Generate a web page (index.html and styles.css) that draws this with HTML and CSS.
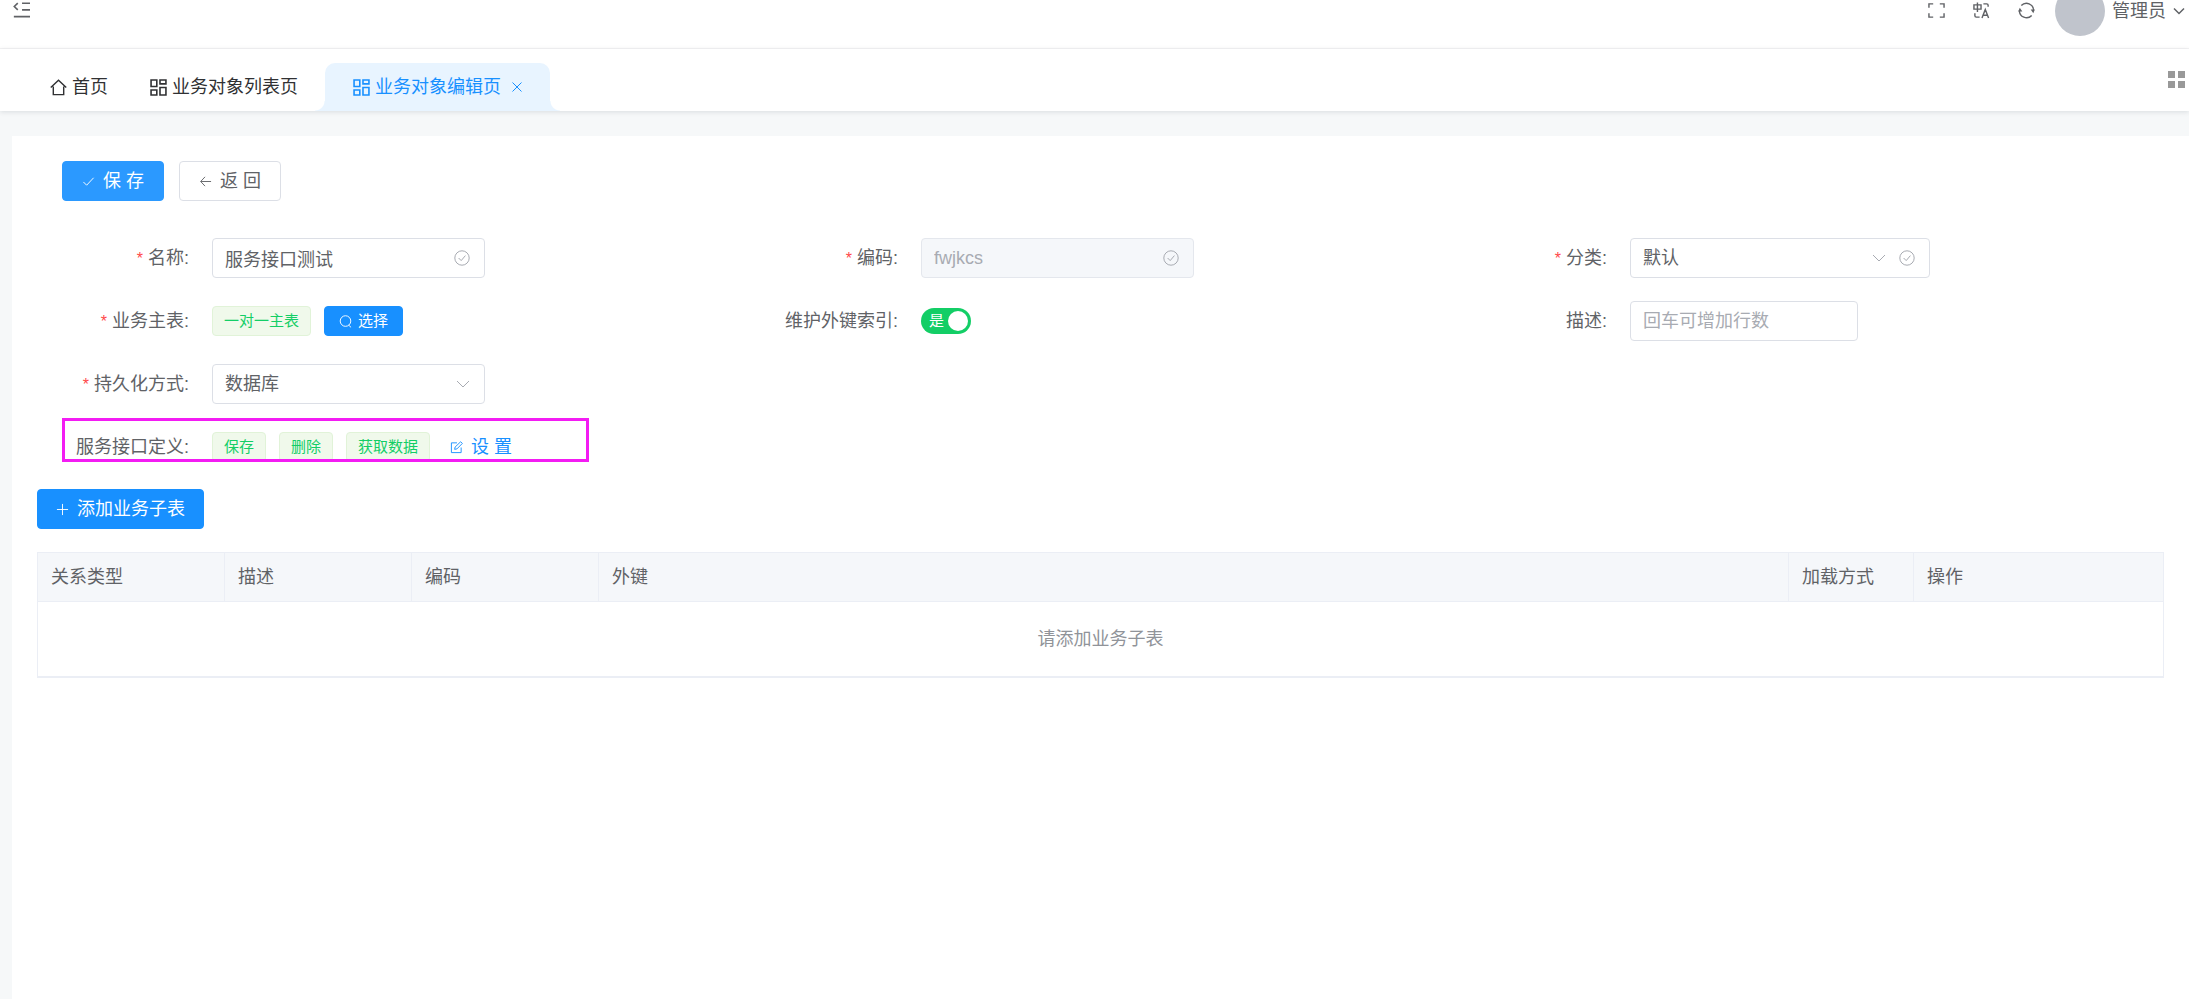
FILE: index.html
```html
<!DOCTYPE html>
<html lang="zh-CN">
<head>
<meta charset="utf-8">
<title>业务对象编辑页</title>
<link rel="stylesheet" href="styles.css">
</head>
<body>
<svg class="sprite" aria-hidden="true">
  <symbol id="i-grid" viewBox="0 0 16 16"><path d="M1 1h5.4v6H1zM9.4 1H15v3.6H9.4zM1 10.4h5.4V15H1zM9.4 8H15v7H9.4z"/></symbol>
  <symbol id="i-okc" viewBox="0 0 16 16"><circle cx="8" cy="8" r="7.2"/><path d="M4.6 8l2.6 2.6 4.2-5"/></symbol>
  <symbol id="i-down" viewBox="0 0 14 14"><path d="M1 4l6 6 6-6"/></symbol>
</svg>

<header class="header">
  <button class="icon-btn" aria-label="收起菜单"><svg class="ico" viewBox="0 0 16 16"><path d="M4.5 1L1.2 4.2l3.300 3.200M8.500 1.200H16M8.500 7.400H16M.8 13.800H16"/></svg></button>
  <div class="tools">
    <button class="icon-btn" aria-label="全屏"><svg class="ico" viewBox="0 0 18 16"><path d="M1 5V1h4.500M12.500 1H17v4M17 11v4h-4.500M5.500 15H1v-4"/></svg></button>
    <button class="icon-btn" aria-label="语言"><svg class="ico" viewBox="0 0 18 18"><path d="M1 3h7.500v4.500H1zM4.700 .5v10M11 2h3.500q1.500 0 1.500 1.500V5M2 12v2.500Q2 16 3.500 16H7M9.500 17l3.500-9 3.500 9M10.600 14h4.800"/></svg></button>
    <button class="icon-btn" aria-label="刷新"><svg class="ico" viewBox="0 0 18 18"><path d="M3.500 3.800A7.500 7.500 0 0 1 16.500 9M14.500 14.200A7.500 7.500 0 0 1 1.500 9"/><path class="solid" d="M13.400 8h4.400l-1.600 3.800zM.2 10h4.400L1.900 6.200z"/></svg></button>
    <span class="avatar"></span>
    <button class="user">管理员<svg class="caret" viewBox="0 0 14 14"><path d="M2 4.500l5 5 5-5"/></svg></button>
  </div>
</header>

<nav class="tabs">
  <a class="tab" href="#"><svg class="ico" viewBox="0 0 18 18"><path d="M3.500 8v8.500h11V8M.8 9L9 1.200 17.200 9"/></svg>首页</a>
  <a class="tab" href="#"><svg class="ico"><use href="#i-grid"/></svg>业务对象列表页</a>
  <a class="tab active" href="#"><svg class="ico"><use href="#i-grid"/></svg>业务对象编辑页<svg class="close" viewBox="0 0 10 10"><path d="M.5.5l9 9M9.500.5l-9 9"/></svg></a>
  <button class="apps" aria-label="更多"><i></i><i></i><i></i><i></i></button>
</nav>

<main class="card">
  <div class="actions">
    <button class="btn primary light"><svg class="bi" viewBox="0 0 14 14"><path d="M1.500 7.500L5 11l7.500-8"/></svg>保 存</button>
    <button class="btn"><svg class="bi" viewBox="0 0 14 14"><path d="M13 7H2M6.500 2L1.800 7l4.700 5"/></svg>返 回</button>
  </div>

  <form class="form">
    <div class="item"><label class="req" for="name">名称:</label>
      <span class="field"><input id="name" type="text" value="服务接口测试"><span class="suffix"><svg><use href="#i-okc"/></svg></span></span></div>
    <div class="item"><label class="req" for="code">编码:</label>
      <span class="field"><input id="code" type="text" value="fwjkcs" disabled><span class="suffix"><svg><use href="#i-okc"/></svg></span></span></div>
    <div class="item"><label class="req" for="type">分类:</label>
      <span class="field wide"><select id="type"><option>默认</option></select><span class="suffix"><svg class="arrow"><use href="#i-down"/></svg><svg><use href="#i-okc"/></svg></span></span></div>

    <div class="item"><label class="req" for="pick">业务主表:</label>
      <span class="tag">一对一主表</span><button class="btn primary small" id="pick" type="button"><svg class="bi" viewBox="0 0 14 14"><circle cx="7" cy="6.500" r="5.700"/><path d="M10.500 11l2.500 2.300"/></svg>选择</button></div>
    <div class="item"><label for="fk">维护外键索引:</label>
      <span class="switch"><input id="fk" type="checkbox" role="switch" checked><span class="on">是</span></span></div>
    <div class="item"><label for="desc">描述:</label>
      <textarea id="desc" rows="1" placeholder="回车可增加行数"></textarea></div>

    <div class="item"><label class="req" for="store">持久化方式:</label>
      <span class="field"><select id="store"><option>数据库</option></select><span class="suffix"><svg class="arrow"><use href="#i-down"/></svg></span></span></div>

    <div class="item first marked"><label for="set">服务接口定义:</label>
      <span class="tag">保存</span><span class="tag">删除</span><span class="tag">获取数据</span>
      <button class="link" id="set" type="button"><svg class="bi" viewBox="0 0 14 14"><path d="M7.500 2H1.500v10.500H12V7M5 9l.5-2.500L11.500.8l1.800 1.800L7.500 8.500z"/></svg>设 置</button></div>
  </form>

  <button class="btn primary add"><svg class="bi" viewBox="0 0 14 14"><path d="M7 1v12M1 7h12"/></svg>添加业务子表</button>

  <table class="grid">
    <colgroup><col class="c-m"><col class="c-m"><col class="c-m"><col><col class="c-s"><col class="c-l"></colgroup>
    <thead><tr><th>关系类型</th><th>描述</th><th>编码</th><th>外键</th><th>加载方式</th><th>操作</th></tr></thead>
    <tbody><tr><td colspan="6">请添加业务子表</td></tr></tbody>
  </table>
</main>
</body>
</html>
```
FILE: styles.css
```css
*, *::before, *::after { box-sizing: border-box; }
html, body { height: 100%; }
body {
  margin: 0;
  display: flex;
  flex-direction: column;
  overflow: hidden;
  background: #f6f8f9;
  color: #606266;
  font: 400 18px/24px "Liberation Sans", "Noto Sans CJK SC", sans-serif;
}
button, input, select, textarea { font: inherit; color: inherit; margin: 0; }
button { background: none; border: 0; padding: 0; cursor: pointer; }
svg { fill: none; stroke: currentColor; }
.sprite { position: absolute; width: 0; height: 0; }
.solid { fill: currentColor; stroke: none; }

/* The bar is partly scrolled out above the window */
.header {
  flex: none;
  display: flex;
  align-items: center;
  justify-content: space-between;
  height: 76px;
  margin-top: -27px;
  padding: 0 3px 0 13px;
  background: #fff;
  border-bottom: 1px solid #f4f4f5;
}
.icon-btn { display: flex; }
.ico { width: 17px; height: 17px; stroke-width: 1.5; }
.tools { display: flex; align-items: center; }
.tools .icon-btn { margin-right: 28px; }
.tools .icon-btn:nth-child(3) { margin-right: 20px; }
.avatar { width: 50px; height: 50px; border-radius: 50%; background: #c0c4cc; }
.user { display: flex; align-items: center; gap: 6px; margin-left: 7px; }
.caret { width: 14px; height: 14px; stroke-width: 1.5; }

.tabs {
  position: relative;
  flex: none;
  display: flex;
  align-items: flex-end;
  height: 62px;
  padding: 0 4px 0 25px;
  background: #fff;
  box-shadow: 0 1px 5px rgba(0, 21, 41, .12);
}
.tab {
  position: relative;
  display: flex;
  align-items: center;
  gap: 5px;
  height: 48px;
  padding: 0 17px 0 25px;
  color: #303133;
  text-decoration: none;
}
.tab.active {
  margin-left: 10px;
  padding: 0 28px;
  background: #e8f4ff;
  color: #1890ff;
  border-radius: 10px 10px 0 0;
}
.tab.active::before, .tab.active::after {
  content: "";
  position: absolute;
  bottom: 0;
  width: 10px;
  height: 10px;
}
.tab.active::before { right: 100%; background: radial-gradient(circle at 0 0, transparent 9px, #e8f4ff 10px); }
.tab.active::after { left: 100%; background: radial-gradient(circle at 100% 0, transparent 9px, #e8f4ff 10px); }
.close { width: 10px; height: 10px; margin-left: 6px; }
.apps {
  display: grid;
  grid-template-columns: 7px 7px;
  gap: 3px;
  margin: 0 0 23px auto;
}
.apps i { height: 7px; background: #999; }

.card { flex: 1; margin: 25px 0 0 12px; padding: 25px; background: #fff; }
.actions { display: flex; gap: 15px; padding-left: 25px; }
.btn {
  display: inline-flex;
  align-items: center;
  justify-content: center;
  gap: 8px;
  height: 40px;
  padding: 0 19px;
  border: 1px solid #dcdfe6;
  border-radius: 4px;
  background: #fff;
}
.btn.primary { border-color: #1890ff; background: #1890ff; color: #fff; }
.btn.light { border-color: #2b99ff; background: #2b99ff; }
.btn.small { height: 30px; padding: 0 14px; font-size: 15px; gap: 6px; }
.btn.add { padding: 0 18px; }
.bi { width: 13px; height: 13px; }

.form {
  display: grid;
  grid-template-columns: repeat(3, 1fr);
  grid-auto-rows: 40px;
  row-gap: 23px;
  margin: 37px -25px 22px 25px;
}
.item { display: flex; align-items: center; gap: 13px; }
.item label { width: 150px; margin-right: -13px; padding-right: 23px; text-align: right; white-space: nowrap; }
.req::before { content: "*"; margin-right: 5px; color: #ff4949; font-size: 16px; }
.field { position: relative; width: 273px; }
.field.wide { width: 300px; }
.field input, .field select, .item textarea {
  display: block;
  width: 100%;
  height: 40px;
  padding: 0 12px;
  border: 1px solid #dcdfe6;
  border-radius: 4px;
  background: #fff;
  appearance: none;
}
.field input:disabled { background: #f5f7fa; border-color: #e4e7ed; color: #a8abb2; }
.item textarea { width: 228px; padding: 7px 12px; resize: none; overflow: hidden; }
textarea::placeholder { color: #a8abb2; }
.suffix {
  position: absolute;
  top: 0;
  right: 15px;
  height: 100%;
  display: flex;
  align-items: center;
  gap: 13px;
  color: #a8abb2;
  pointer-events: none;
}
.suffix svg { width: 16px; height: 16px; }
.suffix .arrow { width: 14px; height: 14px; }
.tag {
  height: 30px;
  padding: 0 11px;
  border: 1px solid #e1f3d8;
  border-radius: 4px;
  background: #f0f9eb;
  color: #13ce66;
  font-size: 15px;
  line-height: 28px;
}
.switch { position: relative; width: 50px; height: 26px; color: #fff; font-size: 15px; }
.switch input { appearance: none; display: block; width: 50px; height: 26px; border-radius: 13px; background: #13ce66; }
.switch input::after {
  content: "";
  display: block;
  width: 20px;
  height: 20px;
  margin: 3px 3px 3px auto;
  border-radius: 50%;
  background: #fff;
  transform: translateY(3px);
}
.switch input::after { transform: none; }
.on { position: absolute; left: 8px; top: 1px; pointer-events: none; }
.first { grid-column: 1; }
.link { display: flex; align-items: center; gap: 8px; margin-left: 7px; color: #1890ff; }
.marked { position: relative; }
.marked::after {
  content: "";
  position: absolute;
  inset: -9px auto auto 0;
  width: 527px;
  height: 44px;
  border: 3px solid #f31cf3;
  pointer-events: none;
}

.grid {
  width: 100%;
  margin-top: 23px;
  border-collapse: collapse;
  table-layout: fixed;
  border: 1px solid #ebeef5;
  border-bottom-width: 2px;
}
.c-m { width: 187px; }
.c-s { width: 125px; }
.c-l { width: 250px; }
.grid th {
  height: 49px;
  padding: 0 13px;
  border: 1px solid #ebeef5;
  background: #f5f7fa;
  font-weight: inherit;
  text-align: left;
}
.grid td { height: 75px; padding: 0; color: #909399; text-align: center; }
```
